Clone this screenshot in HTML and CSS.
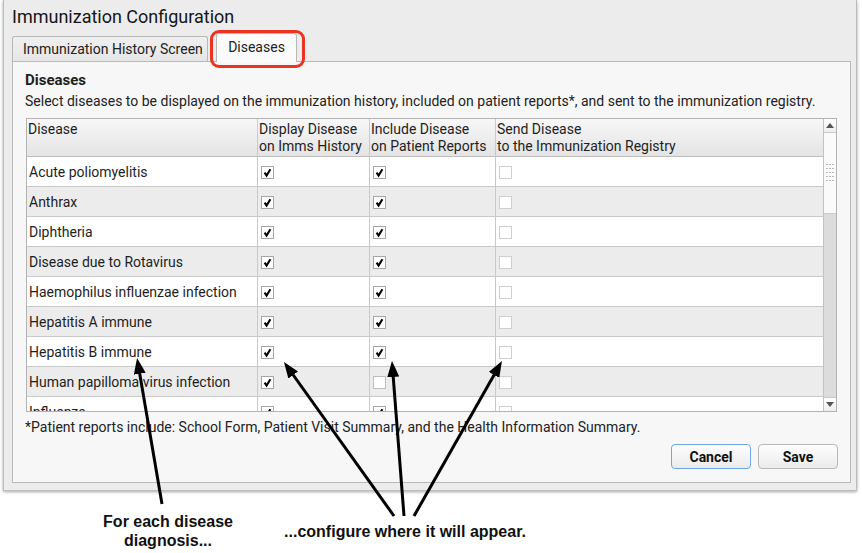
FILE: index.html
```html
<!DOCTYPE html>
<html>
<head>
<meta charset="utf-8">
<link rel="stylesheet" href="styles.css">
</head>
<body>
<svg width="0" height="0" class="defs">
  <defs>
    <symbol id="tick" viewBox="0 0 11 11">
      <path d="M2.6 5.6 L4.6 8.6 L8.4 2.2" fill="none" stroke="#000" stroke-width="2.1" stroke-linejoin="miter"/>
    </symbol>
  </defs>
</svg>
<div class="page">
  <div class="window">
    <h1 class="title">Immunization Configuration</h1>
    <div class="tabs">
      <div class="tab">Immunization History Screen</div>
      <div class="tab active">Diseases</div>
    </div>
    <div class="panel">
      <h2 class="heading">Diseases</h2>
      <p class="desc">Select diseases to be displayed on the immunization history, included on patient reports*, and sent to the immunization registry.</p>
      <div class="table">
        <div class="data">
          <div class="row head">
            <div class="cell">Disease</div>
            <div class="cell">Display Disease<br>on Imms History</div>
            <div class="cell">Include Disease<br>on Patient Reports</div>
            <div class="cell last">Send Disease<br>to the Immunization Registry</div>
          </div>
          <div class="rows">
            <div class="row">
              <div class="cell">Acute poliomyelitis</div>
              <div class="cell"><span class="cb on"><svg><use href="#tick"/></svg></span></div>
              <div class="cell"><span class="cb on"><svg><use href="#tick"/></svg></span></div>
              <div class="cell last"><span class="cb off light"></span></div>
            </div>
            <div class="row alt">
              <div class="cell">Anthrax</div>
              <div class="cell"><span class="cb on"><svg><use href="#tick"/></svg></span></div>
              <div class="cell"><span class="cb on"><svg><use href="#tick"/></svg></span></div>
              <div class="cell last"><span class="cb off light"></span></div>
            </div>
            <div class="row">
              <div class="cell">Diphtheria</div>
              <div class="cell"><span class="cb on"><svg><use href="#tick"/></svg></span></div>
              <div class="cell"><span class="cb on"><svg><use href="#tick"/></svg></span></div>
              <div class="cell last"><span class="cb off light"></span></div>
            </div>
            <div class="row alt">
              <div class="cell">Disease due to Rotavirus</div>
              <div class="cell"><span class="cb on"><svg><use href="#tick"/></svg></span></div>
              <div class="cell"><span class="cb on"><svg><use href="#tick"/></svg></span></div>
              <div class="cell last"><span class="cb off light"></span></div>
            </div>
            <div class="row">
              <div class="cell">Haemophilus influenzae infection</div>
              <div class="cell"><span class="cb on"><svg><use href="#tick"/></svg></span></div>
              <div class="cell"><span class="cb on"><svg><use href="#tick"/></svg></span></div>
              <div class="cell last"><span class="cb off light"></span></div>
            </div>
            <div class="row alt">
              <div class="cell">Hepatitis A immune</div>
              <div class="cell"><span class="cb on"><svg><use href="#tick"/></svg></span></div>
              <div class="cell"><span class="cb on"><svg><use href="#tick"/></svg></span></div>
              <div class="cell last"><span class="cb off light"></span></div>
            </div>
            <div class="row">
              <div class="cell">Hepatitis B immune</div>
              <div class="cell"><span class="cb on"><svg><use href="#tick"/></svg></span></div>
              <div class="cell"><span class="cb on"><svg><use href="#tick"/></svg></span></div>
              <div class="cell last"><span class="cb off light"></span></div>
            </div>
            <div class="row alt">
              <div class="cell">Human papilloma virus infection</div>
              <div class="cell"><span class="cb on"><svg><use href="#tick"/></svg></span></div>
              <div class="cell"><span class="cb off"></span></div>
              <div class="cell last"><span class="cb off light"></span></div>
            </div>
            <div class="row">
              <div class="cell">Influenza</div>
              <div class="cell"><span class="cb on"><svg><use href="#tick"/></svg></span></div>
              <div class="cell"><span class="cb on"><svg><use href="#tick"/></svg></span></div>
              <div class="cell last"><span class="cb off light"></span></div>
            </div>
          </div>
        </div>
        <div class="scrollbar">
          <div class="sb-btn up"><span class="tri-up"></span></div>
          <div class="thumb">
            <svg class="grip" width="12" height="20" viewBox="0 0 12 20">
              <g fill="#b9b9b9">
                <rect x="2" y="1" width="2" height="1"/><rect x="5" y="1" width="2" height="1"/><rect x="8" y="1" width="2" height="1"/>
                <rect x="2" y="5" width="2" height="1"/><rect x="5" y="5" width="2" height="1"/><rect x="8" y="5" width="2" height="1"/>
                <rect x="2" y="9" width="2" height="1"/><rect x="5" y="9" width="2" height="1"/><rect x="8" y="9" width="2" height="1"/>
                <rect x="2" y="13" width="2" height="1"/><rect x="5" y="13" width="2" height="1"/><rect x="8" y="13" width="2" height="1"/>
                <rect x="2" y="17" width="2" height="1"/><rect x="5" y="17" width="2" height="1"/><rect x="8" y="17" width="2" height="1"/>
              </g>
            </svg>
          </div>
          <div class="track"></div>
          <div class="sb-btn down"><span class="tri-down"></span></div>
        </div>
      </div>
      <p class="note">*Patient reports include: School Form, Patient Visit Summary, and the Health Information Summary.</p>
      <div class="buttons">
        <button class="btn focus">Cancel</button>
        <button class="btn">Save</button>
      </div>
    </div>
  </div>
  <div class="annotations">
    <div class="callout first">For each disease<br>diagnosis...</div>
    <div class="callout second">...configure where it will appear.</div>
  </div>
  <svg class="arrows" width="862" height="553" viewBox="0 0 862 553">
    <defs>
      <marker id="ah" viewBox="0 0 16 12" refX="8" refY="6" markerWidth="16" markerHeight="12" markerUnits="userSpaceOnUse" orient="auto">
        <path d="M0 0 L16 6 L0 12 Z" fill="#000"/>
      </marker>
    </defs>
    <g stroke="#000" stroke-width="3" fill="none">
      <line x1="162" y1="504" x2="138.4" y2="365.9" marker-end="url(#ah)"/>
      <line x1="394" y1="516" x2="288.6" y2="368.5" marker-end="url(#ah)"/>
      <line x1="404" y1="516" x2="392.6" y2="369" marker-end="url(#ah)"/>
      <line x1="414" y1="516" x2="498" y2="368" marker-end="url(#ah)"/>
    </g>
  </svg>
</div>
</body>
</html>
```
FILE: styles.css
```css
* { box-sizing: border-box; }

html, body {
  margin: 0;
  padding: 0;
  background: #ffffff;
}

.defs { position: absolute; width: 0; height: 0; }

.page {
  position: relative;
  width: 862px;
  height: 553px;
  overflow: hidden;
  background: #ffffff;
  font-family: Roboto, "Noto Sans", sans-serif;
  color: #222222;
}

.window {
  margin-left: 3px;
  width: 854px;
  background: #ececec;
  border: 1px solid #bdbdbd;
  border-top: 0;
  box-shadow: 0 1px 3px rgba(0, 0, 0, 0.35);
  padding: 0 5px 7px 8px;
}

.title {
  margin: 0;
  padding-top: 6px;
  font-size: 18px;
  line-height: 22px;
  font-weight: 400;
  color: #161616;
}

.tabs {
  display: flex;
  align-items: flex-start;
  gap: 8px;
  height: 29px;
  margin-top: 5px;
  margin-bottom: -1px;
}

.tab {
  font-size: 14px;
  color: #222222;
  border: 1px solid #b7b7b7;
  border-bottom: 0;
  border-radius: 3px 3px 0 0;
  white-space: nowrap;
}

.tab:not(.active) {
  margin-top: 3px;
  width: 196px;
  height: 25px;
  line-height: 24px;
  padding-left: 10px;
  background: linear-gradient(#f0f0f0, #e6e6e6);
}

.tab.active {
  position: relative;
  z-index: 1;
  width: 81px;
  height: 29px;
  line-height: 27px;
  text-align: center;
  background: #fbfbfb;
}

.tab.active::after {
  content: "";
  position: absolute;
  left: -7px;
  top: -4px;
  right: -9px;
  bottom: -6px;
  border: 3px solid #ec3322;
  border-radius: 9px;
}

.panel {
  background: #f7f7f7;
  border: 1px solid #b9b9b9;
  padding: 9px 13px 13px 12px;
}

.heading {
  margin: 0;
  font-size: 15px;
  line-height: 18px;
  font-weight: 700;
  color: #1e1e1e;
}

.desc {
  margin: 3px 0 0;
  font-size: 14px;
  line-height: 18px;
  white-space: nowrap;
}

.table {
  margin: 8px 0 0 1px;
  width: 811px;
  height: 294px;
  border: 1px solid #b3b3b3;
  display: flex;
  background: #ffffff;
}

.data {
  width: 796px;
  display: flex;
  flex-direction: column;
}

.row {
  display: grid;
  grid-template-columns: 231px 112px 126px 327px;
  height: 30px;
  border-bottom: 1px solid #c9c9c9;
  background: #ffffff;
  font-size: 14px;
}

.row.alt { background: #ececec; }

.row.head {
  height: 38px;
  background: linear-gradient(#f7f7f7, #e4e4e4);
  border-bottom: 1px solid #bdbdbd;
  line-height: 17px;
}

.cell {
  border-right: 1px solid #c9c9c9;
  padding: 0 2px;
  display: flex;
  align-items: center;
  white-space: nowrap;
  color: #1e1e1e;
}

.row.head .cell {
  display: block;
  padding: 2px 1px 0;
}

.row:not(.head) .cell:not(:first-child) { padding-left: 3px; }

.cell.last { border-right: 0; }

.rows {
  height: 254px;
  overflow: hidden;
}

.cb {
  display: inline-block;
  width: 13px;
  height: 13px;
  background: #ffffff;
  border: 1px solid #a6a6a6;
  margin-top: 1px;
}

.cb svg {
  display: block;
  width: 11px;
  height: 11px;
}

.cb.off { border-color: #bdbdbd; }
.cb.off.light { border-color: #cfcfcf; }

.scrollbar {
  width: 13px;
  border-left: 1px solid #c2c2c2;
  display: flex;
  flex-direction: column;
  background: #dcdcdc;
}

.sb-btn {
  height: 14px;
  background: linear-gradient(#ffffff, #ededed);
  display: flex;
  align-items: center;
  justify-content: center;
}

.sb-btn.up { border-bottom: 1px solid #c9c9c9; }
.sb-btn.down { border-top: 1px solid #c9c9c9; }

.tri-up {
  width: 0;
  height: 0;
  border-left: 4px solid transparent;
  border-right: 4px solid transparent;
  border-bottom: 5px solid #555555;
}

.tri-down {
  width: 0;
  height: 0;
  border-left: 4px solid transparent;
  border-right: 4px solid transparent;
  border-top: 5px solid #555555;
}

.thumb {
  height: 81px;
  background: #fafafa;
  border-bottom: 1px solid #cccccc;
  display: flex;
  align-items: center;
}

.grip { display: block; }

.track { flex: 1; }

.note {
  margin: 6px 0 0;
  font-size: 14px;
  line-height: 18px;
  white-space: nowrap;
}

.buttons {
  margin-top: 8px;
  margin-right: -1px;
  display: flex;
  justify-content: flex-end;
  gap: 7px;
}

.btn {
  height: 25px;
  width: 80px;
  font-family: Roboto, "Noto Sans", sans-serif;
  font-size: 14px;
  font-weight: 700;
  color: #111111;
  background: linear-gradient(#fefefe, #ebebeb);
  border: 1px solid #b8b8b8;
  border-radius: 4px;
  padding: 0;
}

.btn.focus { border-color: #6ea8e3; }

.annotations {
  display: flex;
  align-items: center;
  padding-top: 21px;
  padding-left: 88px;
  font-family: "Liberation Sans", Arial, sans-serif;
  font-weight: 700;
  font-size: 16px;
  line-height: 19px;
  color: #111111;
}

.callout { text-align: center; white-space: nowrap; }
.callout.first { width: 160px; }
.callout.second { width: 314px; }

.arrows {
  position: absolute;
  left: 0;
  top: 0;
  pointer-events: none;
}
```
